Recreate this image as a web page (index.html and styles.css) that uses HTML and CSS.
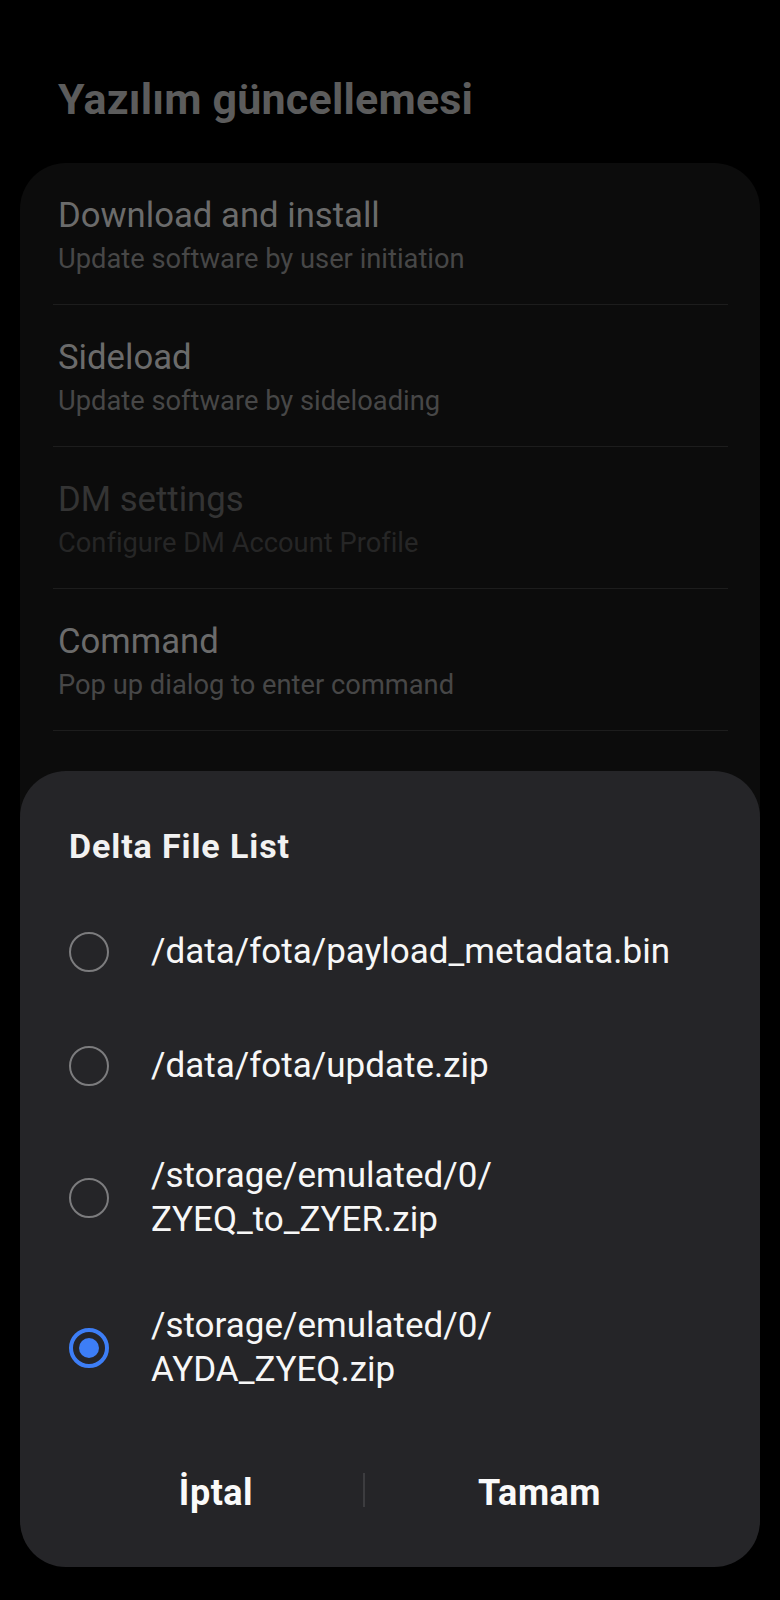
FILE: index.html
```html
<!DOCTYPE html>
<html lang="tr">
<head>
<meta charset="utf-8">
<title>Yazılım güncellemesi</title>
<link rel="stylesheet" href="styles.css">
</head>
<body>
<div class="screen">
  <h1 class="page-title">Yazılım güncellemesi</h1>
  <div class="card">
    <div class="item">
      <div class="item-title">Download and install</div>
      <div class="item-sub">Update software by user initiation</div>
    </div>
    <div class="item">
      <div class="item-title">Sideload</div>
      <div class="item-sub">Update software by sideloading</div>
    </div>
    <div class="item disabled">
      <div class="item-title">DM settings</div>
      <div class="item-sub">Configure DM Account Profile</div>
    </div>
    <div class="item">
      <div class="item-title">Command</div>
      <div class="item-sub">Pop up dialog to enter command</div>
    </div>
    <div class="item last">
      <div class="item-title">Device info</div>
    </div>
  </div>

  <div class="dialog">
    <div class="dialog-title">Delta File List</div>
    <div class="options">
      <div class="option">
        <span class="radio"></span>
        <span class="option-text">/data/fota/payload_metadata.bin</span>
      </div>
      <div class="option">
        <span class="radio"></span>
        <span class="option-text">/data/fota/update.zip</span>
      </div>
      <div class="option">
        <span class="radio"></span>
        <span class="option-text">/storage/emulated/0/<br>ZYEQ_to_ZYER.zip</span>
      </div>
      <div class="option">
        <span class="radio checked"></span>
        <span class="option-text">/storage/emulated/0/<br>AYDA_ZYEQ.zip</span>
      </div>
    </div>
    <div class="buttons">
      <div class="btn">İptal</div>
      <div class="btn-sep"></div>
      <div class="btn">Tamam</div>
    </div>
  </div>
</div>
</body>
</html>
```

FILE: styles.css
```css
* { box-sizing: border-box; }

html, body {
  margin: 0;
  padding: 0;
  background: #000;
}

body {
  font-family: Roboto, "Noto Sans", "Liberation Sans", sans-serif;
  width: 780px;
  height: 1600px;
  overflow: hidden;
}

.screen {
  position: relative;
  width: 780px;
  height: 1600px;
  padding: 0 20px;
}

.page-title {
  margin: 0;
  padding: 74px 0 0 38px;
  font-size: 43px;
  line-height: 50px;
  font-weight: 700;
  color: #5c5c5c;
  letter-spacing: 0.2px;
}

.card {
  margin-top: 39px;
  background: #0c0c0c;
  border-radius: 46px;
  padding: 0 32px 0 33px;
}

.item {
  padding: 30px 0 23px 5px;
  border-bottom: 1px solid #1d1d1d;
}

.item.last {
  border-bottom: none;
  padding-top: 33px;
  padding-bottom: 80px;
}

.item.last .item-title {
  color: #555;
}

.item-title {
  font-size: 34.7px;
  line-height: 44px;
  color: #6b6b6b;
}

.item-sub {
  font-size: 27.3px;
  line-height: 44px;
  color: #474747;
}

.item.disabled .item-title {
  color: #343434;
}

.item.disabled .item-sub {
  color: #262626;
}

.dialog {
  position: absolute;
  left: 20px;
  top: 771px;
  width: 740px;
  height: 796px;
  background: #252528;
  border-radius: 46px;
  padding: 53px 46px 34px 49px;
  display: flex;
  flex-direction: column;
}

.dialog-title {
  font-size: 34px;
  line-height: 44px;
  font-weight: 700;
  color: #f2f2f2;
  letter-spacing: 0.9px;
}

.options {
  margin-top: 27px;
  display: flex;
  flex-direction: column;
}

.option {
  min-height: 114px;
  padding: 31px 0;
  display: flex;
  align-items: center;
}

.radio {
  flex: none;
  width: 40px;
  height: 40px;
  border-radius: 50%;
  border: 2.5px solid #7c7c7e;
  margin-right: 42px;
  display: flex;
  align-items: center;
  justify-content: center;
}

.radio.checked {
  border: 4px solid #3d7ef6;
}

.radio.checked::after {
  content: "";
  width: 20px;
  height: 20px;
  border-radius: 50%;
  background: #3d7ef6;
}

.option-text {
  font-size: 35px;
  line-height: 44px;
  color: #f7f7f7;
}

.buttons {
  margin-top: auto;
  height: 80px;
  display: grid;
  grid-template-columns: 294px 2px 1fr;
  align-items: center;
}

.btn {
  text-align: center;
  font-size: 36px;
  line-height: 80px;
  font-weight: 700;
  color: #fafafa;
  letter-spacing: 0.5px;
}

.btn-sep {
  width: 2px;
  height: 34px;
  background: #3c3c3f;
  margin-top: -6px;
}
```
